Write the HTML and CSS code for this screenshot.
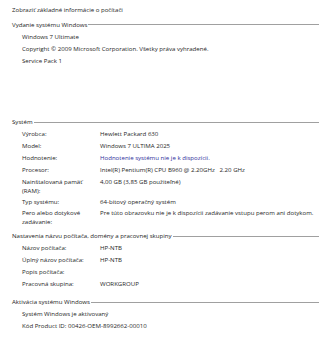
FILE: index.html
```html
<!DOCTYPE html>
<html lang="sk">
<head>
<meta charset="utf-8">
<title>Systém</title>
<link rel="stylesheet" href="styles.css">
</head>
<body>
<div class="page">
  <div class="title">Zobraziť základné informácie o počítači</div>

  <section class="sec sec-first">
    <div class="head"><span>Vydanie systému Windows</span></div>
    <div class="line">Windows 7 Ultimate</div>
    <div class="line">Copyright © 2009 Microsoft Corporation. Všetky práva vyhradené.</div>
    <div class="line">Service Pack 1</div>
  </section>

  <section class="sec sec-system">
    <div class="head"><span>Systém</span></div>
    <div class="row"><div class="lbl">Výrobca:</div><div class="val">Hewlett Packard 630</div></div>
    <div class="row"><div class="lbl">Model:</div><div class="val">Windows 7 ULTIMA 2025</div></div>
    <div class="row"><div class="lbl">Hodnotenie:</div><div class="val link">Hodnotenie systému nie je k dispozícii.</div></div>
    <div class="row"><div class="lbl">Procesor:</div><div class="val">Intel(R) Pentium(R) CPU B960 @ 2.20GHz&nbsp;&nbsp; 2.20 GHz</div></div>
    <div class="row row2"><div class="lbl">Nainštalovaná pamäť (RAM):</div><div class="val">4,00 GB (3,85 GB použiteľné)</div></div>
    <div class="row"><div class="lbl">Typ systému:</div><div class="val">64-bitový operačný systém</div></div>
    <div class="row row2"><div class="lbl">Pero alebo dotykové zadávanie:</div><div class="val">Pre túto obrazovku nie je k dispozícii zadávanie vstupu perom ani dotykom.</div></div>
  </section>

  <section class="sec sec-name">
    <div class="head"><span>Nastavenia názvu počítača, domény a pracovnej skupiny</span></div>
    <div class="row"><div class="lbl">Názov počítača:</div><div class="val">HP-NTB</div></div>
    <div class="row"><div class="lbl">Úplný názov počítača:</div><div class="val">HP-NTB</div></div>
    <div class="row"><div class="lbl">Popis počítača:</div><div class="val"></div></div>
    <div class="row"><div class="lbl">Pracovná skupina:</div><div class="val">WORKGROUP</div></div>
  </section>

  <section class="sec sec-act">
    <div class="head"><span>Aktivácia systému Windows</span></div>
    <div class="line">Systém Windows je aktivovaný</div>
    <div class="line">Kód Product ID: 00426-OEM-8992662-00010</div>
  </section>
</div>
</body>
</html>
```

FILE: styles.css
```css
html, body {
  margin: 0;
  padding: 0;
  background: #ffffff;
}

.page {
  font-family: "Open Sans", "Noto Sans", "DejaVu Sans", sans-serif;
  font-size: 6.1px;
  color: #262626;
  padding: 4px 0 0 12px;
  width: 307px;
}

.title {
  height: 12px;
  line-height: 12px;
  color: #1c1c1c;
}

.sec {
  display: flex;
  flex-direction: column;
}

.sec-first { margin-top: 2.5px; }
.sec-system { margin-top: 49.5px; }
.sec-name { margin-top: 3px; }
.sec-act { margin-top: 6px; }

.head {
  display: flex;
  align-items: center;
  height: 12px;
  line-height: 12px;
  color: #222222;
}

.head::after {
  content: "";
  flex: 1;
  height: 1px;
  margin-left: 1px;
  background: #a0a0a0;
}

.line {
  height: 12px;
  line-height: 12px;
  padding-left: 10px;
}

.row {
  display: grid;
  grid-template-columns: 78px 1fr;
  padding-left: 10px;
  height: 12px;
  line-height: 12px;
  white-space: nowrap;
}

.row2 {
  height: 19.5px;
  line-height: 9.2px;
  padding-top: 0.5px;
  box-sizing: border-box;
}

.row2 .lbl {
  white-space: normal;
  padding-right: 8px;
}

.link {
  color: #2e2e9a;
}
```
